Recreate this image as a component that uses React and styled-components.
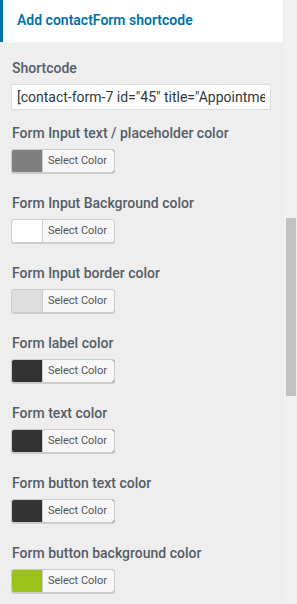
import React from 'react'
import styled, { createGlobalStyle } from 'styled-components'

const GlobalStyle = createGlobalStyle`
  html, body {
    margin: 0;
    padding: 0;
    background: #eeeeee;
  }
  body {
    font-family: Roboto, "Noto Sans", "Liberation Sans", sans-serif;
    -webkit-font-smoothing: antialiased;
  }
`

const Frame = styled.div`
  display: flex;
  width: 297px;
  height: 604px;
  overflow: hidden;
`

const Panel = styled.div`
  width: 283px;
  background: #eeeeee;
  display: flex;
  flex-direction: column;
`

const SectionHeader = styled.h3`
  flex: none;
  margin: 0;
  height: 42px;
  box-sizing: border-box;
  background: #fff;
  border-left: 3px solid #0073aa;
  padding: 0 0 2px 14px;
  display: flex;
  align-items: center;
  font-size: 14px;
  font-weight: 600;
  color: #0073aa;
`

const Controls = styled.ul`
  flex: none;
  list-style: none;
  margin: 0;
  padding: 14px 12px 0 11px;
  display: flex;
  flex-direction: column;
`

const Control = styled.li`
  margin-bottom: ${(p) => p.$gap || 12}px;
`

const Title = styled.span`
  display: block;
  padding-left: 1px;
  font-size: 14px;
  line-height: 24px;
  font-weight: 500;
  color: #555d66;
  margin-bottom: 4px;
  white-space: nowrap;
`

const TextInput = styled.input`
  display: block;
  width: 260px;
  height: 26px;
  box-sizing: border-box;
  margin: 0;
  padding: 0 5px;
  border: 1px solid #ddd;
  border-radius: 0;
  background: #fff;
  font-family: inherit;
  font-size: 14px;
  color: #32373c;
  outline: none;
`

const ColorButton = styled.button`
  display: flex;
  align-items: stretch;
  width: 104px;
  height: 24px;
  box-sizing: border-box;
  margin: 0;
  padding: 0;
  border: 1px solid #ccc;
  border-radius: 3px;
  box-shadow: 0 1px 0 #ccc;
  background: ${(p) => p.$color};
  overflow: hidden;
  cursor: pointer;
`

const Swatch = styled.span`
  width: 30px;
  flex: none;
`

const ButtonText = styled.span`
  flex: 1;
  border-left: 1px solid #ccc;
  background: #f7f7f7;
  border-radius: 0 2px 2px 0;
  font-family: Roboto, "Liberation Sans", sans-serif;
  font-size: 11px;
  line-height: 22px;
  color: #555;
  text-align: center;
  padding-right: 2px;
`

const Track = styled.div`
  width: 14px;
  background: #f1f1f1;
  border-left: 1px solid #ececec;
  box-sizing: border-box;
  padding: 218px 1px 0 2px;
`

const Thumb = styled.div`
  height: 178px;
  background: #c1c1c1;
`

const colors = [
  { label: 'Form Input text / placeholder color', color: '#7f7f7f' },
  { label: 'Form Input Background color', color: '#ffffff' },
  { label: 'Form Input border color', color: '#dddddd' },
  { label: 'Form label color', color: '#333333' },
  { label: 'Form text color', color: '#333333' },
  { label: 'Form button text color', color: '#333333' },
  { label: 'Form button background color', color: '#9cc21a' },
]

function App() {
  return (
    <Frame>
      <GlobalStyle />
      <Panel>
        <SectionHeader>Add contactForm shortcode</SectionHeader>
        <Controls>
          <Control $gap={11}>
            <Title>Shortcode</Title>
            <TextInput
              readOnly
              value={'[contact-form-7 id="45" title="Appointment form"]'}
            />
          </Control>
          {colors.map(({ label, color }) => (
            <Control key={label} $gap={18}>
              <Title>{label}</Title>
              <ColorButton $color={color}>
                <Swatch />
                <ButtonText>Select Color</ButtonText>
              </ColorButton>
            </Control>
          ))}
        </Controls>
      </Panel>
      <Track>
        <Thumb />
      </Track>
    </Frame>
  )
}

export default App
